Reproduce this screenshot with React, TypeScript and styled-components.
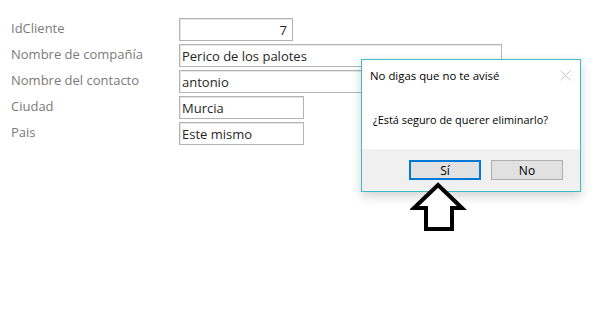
import React from "react";
import styled, { createGlobalStyle } from "styled-components";

const Global = createGlobalStyle`
  html, body { margin: 0; padding: 0; background: #ffffff; }
  body { width: 600px; height: 318px; overflow: hidden; }
`;

const Page = styled.div`
  position: relative;
  width: 600px;
  height: 318px;
  background: #fff;
`;

const Form = styled.div`
  display: grid;
  grid-template-columns: 168px auto;
  grid-auto-rows: 23px;
  row-gap: 3px;
  padding: 18px 0 0 11px;
  font-family: "Open Sans", "Liberation Sans", sans-serif;
  font-size: 13px;
`;

const Label = styled.div`
  display: flex;
  align-items: center;
  color: #7c7a78;
  margin-top: -3px;
`;

const Field = styled.div<{ $w: number; $right?: boolean }>`
  box-sizing: border-box;
  width: ${(p) => p.$w}px;
  height: 23px;
  border: 1px solid #b4b4b4;
  box-shadow: inset 1px 1px 0 #e6e6e6;
  display: flex;
  align-items: center;
  justify-content: ${(p) => (p.$right ? "flex-end" : "flex-start")};
  padding: 0 ${(p) => (p.$right ? "5px" : "0")} 0 2px;
  color: #262626;
  background: #fff;
`;

const Dialog = styled.div`
  position: absolute;
  left: 361px;
  top: 59px;
  width: 220px;
  height: 133px;
  box-sizing: border-box;
  border: 1px solid #3cbcc4;
  background: #fff;
  display: flex;
  flex-direction: column;
  font-family: "Open Sans", "Liberation Sans", sans-serif;
  font-size: 11.4px;
  color: #000;
  box-shadow: 0 4px 10px rgba(0, 0, 0, 0.18);
`;

const TitleBar = styled.div`
  height: 30px;
  display: flex;
  align-items: center;
  justify-content: space-between;
  padding: 0 9px 0 8px;
`;

const Close = styled.svg`
  width: 11px;
  height: 11px;
`;

const Body = styled.div`
  flex: 1;
  display: flex;
  align-items: center;
  padding: 0 0 0 11px;
  font-size: 10.9px;
`;

const Footer = styled.div`
  height: 42px;
  background: #f0f0f0;
  display: flex;
  justify-content: flex-end;
  align-items: flex-start;
  gap: 10px;
  padding: 11px 17px 0 0;
  box-sizing: border-box;
`;

const Button = styled.div<{ $focus?: boolean }>`
  box-sizing: border-box;
  width: 72px;
  height: 20px;
  background: #e1e1e1;
  border: ${(p) => (p.$focus ? "2px solid #0078d7" : "1px solid #adadad")};
  display: flex;
  align-items: center;
  justify-content: center;
  font-size: 12px;
  color: #000;
`;

const Arrow = styled.svg`
  position: absolute;
  left: 410px;
  top: 181px;
  width: 58px;
  height: 52px;
`;

const rows: { label: string; value: string; w: number; right?: boolean }[] = [
  { label: "IdCliente", value: "7", w: 114, right: true },
  { label: "Nombre de compañía", value: "Perico de los palotes", w: 323 },
  { label: "Nombre del contacto", value: "antonio", w: 323 },
  { label: "Ciudad", value: "Murcia", w: 125 },
  { label: "Pais", value: "Este mismo", w: 125 },
];

export default function App() {
  return (
    <Page>
      <Global />
      <Form>
        {rows.map((r) => (
          <React.Fragment key={r.label}>
            <Label>{r.label}</Label>
            <Field $w={r.w} $right={r.right}>
              {r.value}
            </Field>
          </React.Fragment>
        ))}
      </Form>
      <Dialog>
        <TitleBar>
          <span>No digas que no te avisé</span>
          <Close viewBox="0 0 11 11">
            <path d="M0.5 0.5 L10.5 10.5 M10.5 0.5 L0.5 10.5" stroke="#c8c8c8" strokeWidth="1" />
          </Close>
        </TitleBar>
        <Body>¿Está seguro de querer eliminarlo?</Body>
        <Footer>
          <Button $focus>Sí</Button>
          <Button>No</Button>
        </Footer>
      </Dialog>
      <Arrow viewBox="0 0 58 52">
        <path
          d="M28 4 L52 27 L42 27 L42 48 L16 48 L16 27 L4 27 Z"
          fill="#fff"
          stroke="#000"
          strokeWidth="4"
          strokeLinejoin="miter"
        />
      </Arrow>
    </Page>
  );
}
